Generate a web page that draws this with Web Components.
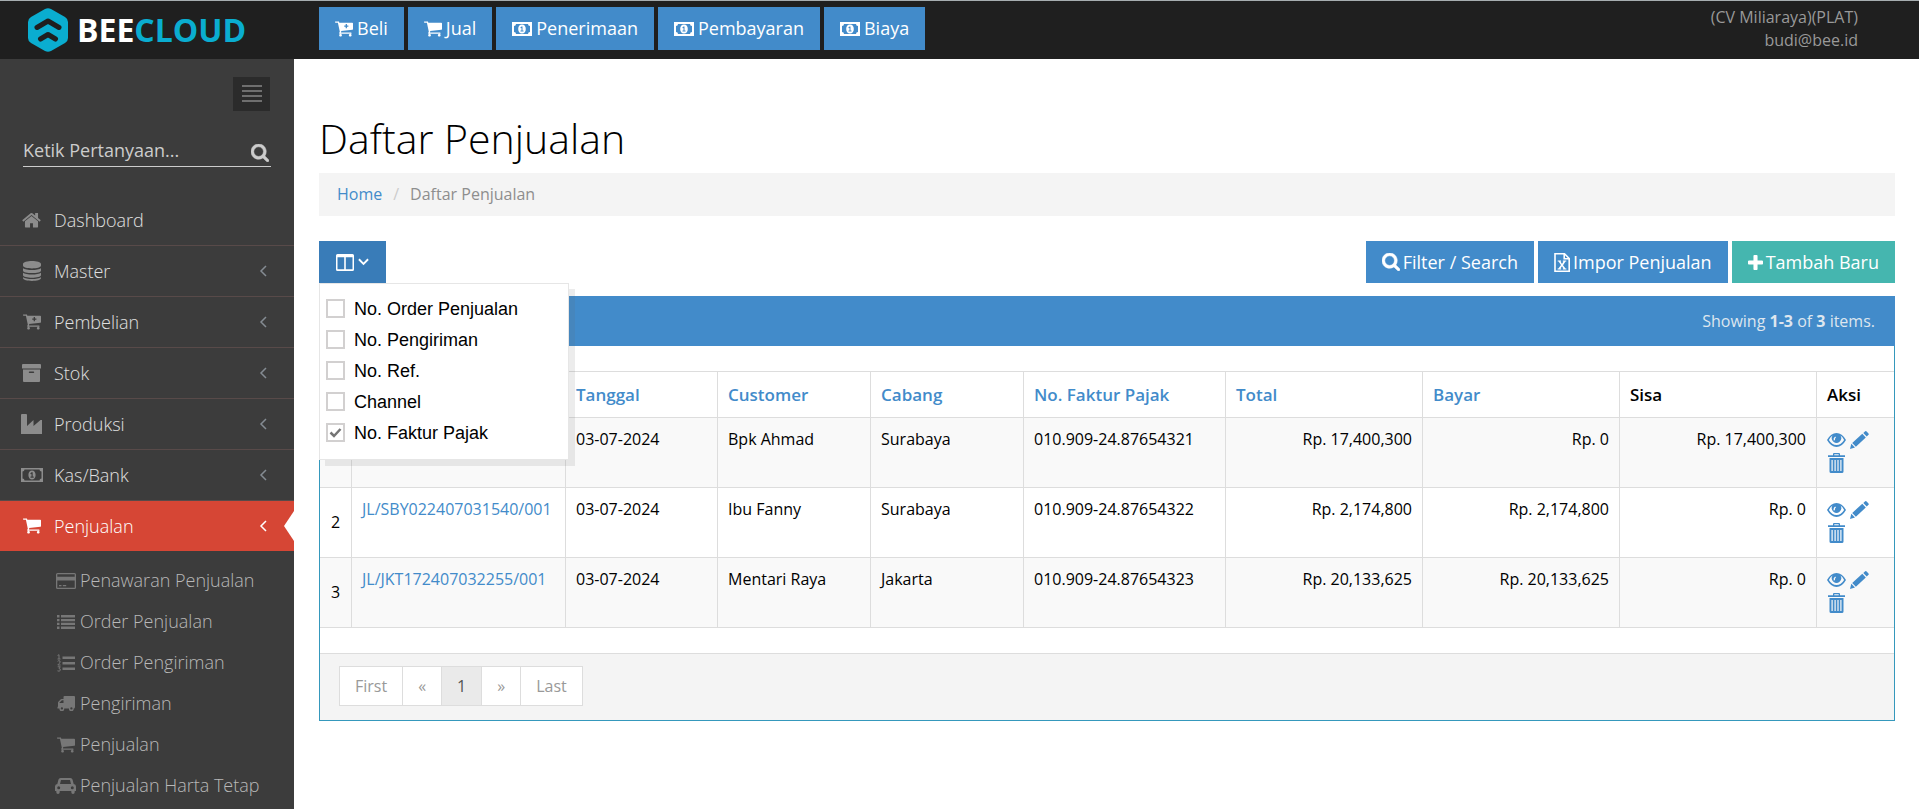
<!DOCTYPE html>
<html lang="id">
<head>
<meta charset="utf-8">
<title>Daftar Penjualan - Beecloud</title>
<style>
html, body { margin: 0; }
body { background: #fff; color: #000; font: 16px/23px "Open Sans", "Noto Sans", sans-serif; }
</style>
</head>
<body>
<bee-app>
  <bee-topbar slot="top">
    <bee-action icon="cart-plus" href="#beli">Beli</bee-action>
    <bee-action icon="cart" href="#jual">Jual</bee-action>
    <bee-action icon="money" href="#penerimaan">Penerimaan</bee-action>
    <bee-action icon="money" href="#pembayaran">Pembayaran</bee-action>
    <bee-action icon="money" href="#biaya">Biaya</bee-action>
    <span slot="company">(CV Miliaraya)(PLAT)</span>
    <span slot="email">budi@bee.id</span>
  </bee-topbar>
  <bee-sidebar slot="side">
    <bee-menu-item icon="home">Dashboard</bee-menu-item>
    <bee-menu-item icon="database" expandable>Master</bee-menu-item>
    <bee-menu-item icon="cart-plus" expandable>Pembelian</bee-menu-item>
    <bee-menu-item icon="archive" expandable>Stok</bee-menu-item>
    <bee-menu-item icon="industry" expandable>Produksi</bee-menu-item>
    <bee-menu-item icon="bill" expandable>Kas/Bank</bee-menu-item>
    <bee-menu-item icon="cart" expandable active>Penjualan
      <bee-submenu-item slot="sub" icon="card">Penawaran Penjualan</bee-submenu-item>
      <bee-submenu-item slot="sub" icon="list">Order Penjualan</bee-submenu-item>
      <bee-submenu-item slot="sub" icon="list-ol">Order Pengiriman</bee-submenu-item>
      <bee-submenu-item slot="sub" icon="truck">Pengiriman</bee-submenu-item>
      <bee-submenu-item slot="sub" icon="cart">Penjualan</bee-submenu-item>
      <bee-submenu-item slot="sub" icon="car">Penjualan Harta Tetap</bee-submenu-item>
    </bee-menu-item>
  </bee-sidebar>
  <bee-page-head>Daftar Penjualan</bee-page-head>
  <bee-toolbar>
    <bee-column-picker slot="left"></bee-column-picker>
    <bee-button icon="search">Filter / Search</bee-button>
    <bee-button icon="excel">Impor Penjualan</bee-button>
    <bee-button icon="plus" kind="success">Tambah Baru</bee-button>
  </bee-toolbar>
  <bee-panel>
    <span slot="summary">Showing <b>1-3</b> of <b>3</b> items.</span>
    <bee-sales-table></bee-sales-table>
    <bee-pagination slot="footer"></bee-pagination>
  </bee-panel>
</bee-app>

<script>
const CART = 'M704 1536q0 52-38 90t-90 38-90-38-38-90 38-90 90-38 90 38 38 90zm896 0q0 52-38 90t-90 38-90-38-38-90 38-90 90-38 90 38 38 90zm128-1088v512q0 24-16.5 42.5t-40.5 21.5l-1044 122q13 60 13 70 0 16-24 64h920q26 0 45 19t19 45-19 45-45 19h-1024q-26 0-45-19t-19-45q0-11 8-31.5t16-36 21.5-40 15.5-29.5l-177-823h-204q-26 0-45-19t-19-45 19-45 45-19h256q16 0 28.5 6.5t19.5 15.5 13 24.5 8 26 5.5 29.5 4.5 26h1201q26 0 45 19t19 45z';

/* name: [viewBox, markup, width in px, height in px] */
const ICONS = {
  'cart': ['64 128 1664 1664', `<path d="${CART}"/>`, 18, 18],
  'cart-plus': ['64 128 1664 1664', `<path fill-rule="evenodd" d="${CART}M1050 500v130h-130v120h130v130h120v-130h130v-120h-130v-130z"/>`, 18, 18],
  'home': ['60 200 1672 1350', '<path d="M1472 992v480q0 26-19 45t-45 19h-384v-384h-256v384h-384q-26 0-45-19t-19-45v-480q0-1 .5-3t.5-3l575-474 575 474q1 2 1 6zm223-69l-62 74q-8 9-21 11h-3q-13 0-21-7l-692-577-692 577q-12 8-24 7-13-2-21-11l-62-74q-8-10-7-23.5t11-21.5l719-599q32-26 76-26t76 26l244 204v-195q0-14 9-23t23-9h192q14 0 23 9t9 23v408l219 182q10 8 11 21.5t-7 23.5z"/>', 19, 16],
  'search': ['64 128 1664 1664', '<path stroke="currentColor" stroke-width="50" d="M1216 832q0-185-131.5-316.5t-316.5-131.5-316.5 131.5-131.5 316.5 131.5 316.5 316.5 131.5 316.5-131.5 131.5-316.5zm512 832q0 52-38 90t-90 38q-54 0-90-38l-343-342q-179 124-399 124-143 0-273.5-55.5t-225-150-150-225-55.5-273.5 55.5-273.5 150-225 225-150 273.5-55.5 273.5 55.5 225 150 150 225 55.5 273.5q0 220-124 399l343 343q37 37 37 90z"/>', 18, 18],
  'plus': ['192 128 1408 1408', '<path d="M1600 736v192q0 40-28 68t-68 28h-416v416q0 40-28 68t-68 28h-192q-40 0-68-28t-28-68v-416h-416q-40 0-68-28t-28-68v-192q0-40 28-68t68-28h416v-416q0-40 28-68t68-28h192q40 0 68 28t28 68v416h416q40 0 68 28t28 68z"/>', 15, 15],
  'money': ['0 0 20 14', '<path fill-rule="evenodd" d="M0 0h20v14H0zM4 2a2 2 0 0 1-2 2v6a2 2 0 0 1 2 2h12a2 2 0 0 1 2-2V4a2 2 0 0 1-2-2zM10 2.500c2.500 0 3.800 2 3.800 4.500S12.500 11.500 10 11.500 6.200 9.500 6.200 7 7.500 2.500 10 2.500zM9.500 4.500L8.300 5.600l.6.7.6-.4V8.400h-1v1.100h3V8.400h-1V4.500z"/>', 20, 14],
  'bill': ['0 0 22 14', '<path fill-rule="evenodd" d="M0 0h22v14H0zM3.500 1.500a2 2 0 0 1-2 2v7a2 2 0 0 1 2 2h15a2 2 0 0 1 2-2v-7a2 2 0 0 1-2-2zM11 2.500c2.200 0 3.600 2 3.600 4.500s-1.400 4.500-3.600 4.500S7.400 9.500 7.400 7 8.800 2.500 11 2.500zM10.500 4.300L9.200 5.500l.7.8.6-.4v2.700h-1v1.200h3.200V8.600h-1V4.300z"/>', 22, 14],
  'database': ['0 0 18 20', '<path d="M0 3c0-4 18-4 18 0v1.600c0 3.800-18 3.800-18 0zM0 7.200c3 2.400 15 2.400 18 0v2.200c0 3.600-18 3.600-18 0zM0 11.800c3 2.400 15 2.400 18 0V14c0 3.600-18 3.600-18 0zM0 16.200c3 2.400 15 2.400 18 0v.9c0 3.800-18 3.800-18 0z"/>', 18, 20],
  'archive': ['0 0 19 18', '<path fill-rule="evenodd" d="M1 0h17q1 0 1 1v3q0 .6-.6.6H.6Q0 4.600 0 4V1q0-1 1-1zM1 5.500h17v11.600q0 .9-.9.9H1.900q-.9 0-.9-.9zM7.600 7.500q-.8 0-.8.8t.8.8h3.800q.8 0 .8-.8t-.8-.8z"/>', 19, 18],
  'industry': ['0 0 21 20', '<path d="M0 20V1q0-1 1-1h4q1 0 1 1v11l6.500-6v6L19.500 6H21v14z"/>', 21, 20],
  'card': ['0 0 20 16', '<path fill-rule="evenodd" d="M1.500 0h17Q20 0 20 1.500v13q0 1.500-1.500 1.500h-17Q0 16 0 14.500v-13Q0 0 1.500 0zM1.300 1.300v2.500h17.400V1.300zM1.300 7.500v7.200h17.400V7.500zM3 12h2.500v1.300H3zM6.800 12h3.400v1.300H6.800z"/>', 20, 16],
  'list': ['0 0 18 14', '<path d="M0 0h2.500v2.500H0zM4 0h14v2.500H4zM0 3.900h2.500v2.400H0zM4 3.900h14v2.400H4zM0 7.700h2.500v2.400H0zM4 7.700h14v2.400H4zM0 11.500h2.500V14H0zM4 11.500h14V14H4z"/>', 18, 14],
  'list-ol': ['0 0 18 18', '<path d="M5.500 2.500H18V5H5.500zM5.500 8H18v2.500H5.500zM5.500 13.500H18V16H5.500z"/><path fill="none" stroke="currentColor" stroke-width="1" d="M.6 1.500L2 .7V5M.5 5h3M.6 7.300Q2 6 2.900 7 3.500 8 2.500 9.200L.8 11h2.800M.7 12.800h2.600L2 14.500q2 .3 1.200 2-.9 1.200-2.700.3"/>', 18, 18],
  'truck': ['0 0 18 15', '<path fill-rule="evenodd" d="M7.500 0H17q1 0 1 1v10q0 1.500-1.300 1.500A2.400 2.400 0 1 1 12 12.500H7.200A2.400 2.400 0 1 1 2.500 12.500H.5V11L1 10.500V6.800q0-.5.4-1l2.400-2.500q.4-.3.9-.3H6.500V1q0-1 1-1zM2.400 7H6.500V4.300H4.900L2.400 6.700zM4.900 11.300a1.100 1.100 0 1 0 0 2.300 1.100 1.100 0 1 0 0-2.300zM14.400 11.300a1.100 1.100 0 1 0 0 2.300 1.100 1.100 0 1 0 0-2.300z"/>', 18, 15],
  'car': ['0 0 21 16', '<path fill-rule="evenodd" d="M5.500 0h10q1.500 0 2 1.500L18.700 6Q21 6.400 21 8.500V13h-1.300v1.300q0 1.700-1.700 1.700t-1.700-1.700V13H4.700v1.300Q4.700 16 3 16t-1.700-1.700V13H0V8.500Q0 6.400 2.300 6L3.500 1.500Q4 0 5.500 0zM6 2L5 6h11l-1-4zM3.700 8.200a1.500 1.500 0 1 0 0 3 1.500 1.500 0 1 0 0-3zM17.300 8.200a1.500 1.500 0 1 0 0 3 1.500 1.500 0 1 0 0-3z"/>', 21, 16],
  'chevron-left': ['0 0 8 12', '<path fill="none" stroke="currentColor" stroke-width="1.500" d="M7 1L2 6l5 5"/>', 8, 12],
  'chevron-down': ['0 0 12 8', '<path fill="none" stroke="currentColor" stroke-width="2" d="M1 1l5 5 5-5"/>', 11, 8],
  'columns': ['0 0 18 17', '<path fill-rule="evenodd" d="M1.500 0h15Q18 0 18 1.500v14q0 1.500-1.500 1.500h-15Q0 17 0 15.500v-14Q0 0 1.500 0zM1.500 3.200v12h6.700v-12zM9.800 3.200v12h6.700v-12z"/>', 18, 17],
  'excel': ['0 0 16 19', '<path fill="none" stroke="currentColor" stroke-width="1.600" d="M1 .8h9.500L15.200 5.500v12.700H1zM10.200 1v4.800h5"/><path d="M3.700 7.500h3.400v1h-.6L8 10.900l1.400-2.400h-.6v-1h3.500v1h-.8L9 12.200l2.500 3.300h.9v1H8.800v-1h.6L8 13.300l-1.500 2.200h.7v1H3.600v-1h.8L7 12 4.600 8.500h-.9z"/>', 16, 19],
  'eye': ['0 0 19 14', '<path fill-rule="evenodd" d="M9.500 0Q15 0 19 7q-4 7-9.500 7T0 7q4-7 9.500-7zM5.500 2.600Q3.400 4 1.900 7q3 5 7.600 5T17.100 7q-1.500-3-3.600-4.400a4.700 4.700 0 1 1-8 0zM8.200 3.600Q6 5 6.700 7.500l1.200-.2Q7.700 5.300 9 4.600z"/>', 19, 14],
  'pencil': ['0 0 19 18', '<path d="M0 18l1.300-5.200L5 16.600zM2.200 11.900L12.300 2.800l3.500 3.700L5.900 15.700zM13.300 1.900L15.200.3q.7-.6 1.400.1l1.900 2q.7.8 0 1.400l-1.800 1.700z"/>', 19, 18],
  'trash': ['0 0 17 20', '<path fill-rule="evenodd" d="M5 2.200V1q0-1 1-1h5q1 0 1 1v1.200h5V4H0V2.200zM6.300 1.300v.9h4.400v-.9zM1.500 5h14v13.500q0 1.500-1.500 1.500H3q-1.500 0-1.500-1.500zM3.500 7v11h1.200V7zM6.500 7v11h1.200V7zM9.400 7v11h1.200V7zM12.300 7v11h1.200V7z"/>', 17, 20]
};

/* Base element: renders its template into an open shadow root. */
class BeeElement extends HTMLElement {
  constructor() {
    super();
    this.attachShadow({ mode: 'open' });
  }
  connectedCallback() {
    const t = document.createElement('template');
    t.innerHTML = this.render();
    this.shadowRoot.replaceChildren(t.content.cloneNode(true));
  }
}
const define = (name, render) =>
  customElements.define(name, class extends BeeElement { render() { return render(this); } });

define('bee-icon', el => {
  const [box, art, w, h] = ICONS[el.getAttribute('name')];
  return `<style>
    :host { display: inline-flex; flex: none; align-items: center; justify-content: center; }
    svg { display: block; fill: currentColor; }
  </style><svg viewBox="${box}" width="${w}" height="${h}" aria-hidden="true">${art}</svg>`;
});

define('bee-app', () => `<style>
  :host { display: grid; grid-template: auto 1fr / 294px minmax(0, 1fr); min-height: 100vh; }
  header { grid-column: 1 / -1; }
  aside { background: #3c3c3c; }
  main { padding: 59px 24px 24px 25px; }
  </style>
  <header><slot name="top"></slot></header>
  <aside><slot name="side"></slot></aside>
  <main><slot></slot></main>`);

define('bee-topbar', () => `<style>
  :host { display: flex; align-items: flex-start; height: 58px; background: #1f1f1f; border-top: 1px solid #a6adb0; }
  .logo { display: flex; align-items: center; gap: 9px; width: 291px; box-sizing: border-box; padding: 7px 0 0 28px; color: #fff; text-decoration: none; font: 700 32px/44px "Open Sans", sans-serif; }
  .logo i { font-style: normal; color: #0aadd0; }
  .logo svg { display: block; }
  nav { display: flex; gap: 4px; padding: 6px 0 0 28px; }
  .user { margin-left: auto; padding: 5px 61px 0 0; text-align: right; color: #999; display: grid; }
  </style>
  <a class="logo" href="#home">
    <svg width="40" height="44" viewBox="0 0 40 44" aria-hidden="true">
      <path fill="#0aadd0" d="M17 1q3-1.500 6 0l14 8q3 1.800 3 5v16q0 3.200-3 5l-14 8q-3 1.500-6 0L3 35q-3-1.800-3-5V14q0-3.200 3-5z"/>
      <path fill="none" stroke="#1f1f1f" stroke-width="5" stroke-linecap="round" stroke-linejoin="round" d="M9 19.500l11-6.500 11 6.500M12.500 31l7.500-4.500 7.500 4.500"/>
    </svg><span>BEE<i>CLOUD</i></span></a>
  <nav><slot></slot></nav>
  <div class="user"><slot name="company"></slot><slot name="email"></slot></div>`);

define('bee-action', el => `<style>
  :host { display: block; }
  a { display: flex; align-items: center; gap: 4px; height: 43px; padding: 0 16px; box-sizing: border-box; background: #428bca; color: #fff; font-size: 18px; text-decoration: none; }
  </style><a href="${el.getAttribute('href')}"><bee-icon name="${el.getAttribute('icon')}"></bee-icon><span><slot></slot></span></a>`);

define('bee-sidebar', () => `<style>
  :host { display: block; }
  .toggle { display: flex; align-items: center; justify-content: center; width: 37px; height: 34px; margin: 18px 24px 0 auto; padding: 0; border: 0; background: #2b2b2b; color: #6f6f6f; }
  form { display: flex; align-items: center; margin: 23px 23px 28px; height: 32px; border-bottom: 1px solid #ccc; }
  input { flex: 1; min-width: 0; padding: 0; border: 0; outline: 0; background: none; color: #ccc; font: 18px/24px "Open Sans", sans-serif; }
  input::placeholder { color: #ccc; opacity: 1; }
  form button { padding: 6px 2px 0 0; border: 0; background: none; color: #ccc; display: flex; }
  nav { display: block; }
  </style>
  <button class="toggle" aria-label="Menu"><svg width="20" height="18" viewBox="0 0 20 18" fill="currentColor"><path d="M0 0h20v2H0zM0 5h20v2H0zM0 10h20v2H0zM0 15h20v2H0z"/></svg></button>
  <form><input type="text" aria-label="Ketik Pertanyaan" placeholder="Ketik Pertanyaan..."><button type="button" aria-label="Cari"><bee-icon name="search"></bee-icon></button></form>
  <nav><slot></slot></nav>`);

define('bee-menu-item', el => {
  const active = el.hasAttribute('active');
  return `<style>
  :host { display: block; }
  a { position: relative; display: flex; align-items: center; height: 50px; padding: 0 27px 0 19px; border-bottom: 1px solid #584a49; color: #e0e0e0; font-size: 18px; font-weight: 300; text-decoration: none; }
  .icon { width: 25px; margin-right: 10px; color: #8c8c8c; }
  .arrow { margin-left: auto; color: #858c93; }
  .active { background: #d64635; border-bottom: 0; color: #fff; }
  .active .icon, .active .arrow { color: #fff; }
  .active::after { content: ""; position: absolute; right: 0; top: 10px; border: solid transparent; border-width: 15px 10px 15px 0; border-right-color: #fff; }
  .sub { padding-top: 9px; }
  </style>
  <a href="#menu" class="${active ? 'active' : ''}"><bee-icon class="icon" name="${el.getAttribute('icon')}"></bee-icon><span><slot></slot></span>
  ${el.hasAttribute('expandable') ? '<bee-icon class="arrow" name="chevron-left"></bee-icon>' : ''}</a>
  ${active ? '<div class="sub"><slot name="sub"></slot></div>' : ''}`;
});

define('bee-submenu-item', el => `<style>
  :host { display: block; }
  a { display: flex; align-items: center; gap: 4px; height: 41px; padding-left: 55px; color: #b8b8b8; font-size: 18px; font-weight: 300; text-decoration: none; }
  bee-icon { width: 21px; color: #777; }
  </style><a href="#submenu"><bee-icon name="${el.getAttribute('icon')}"></bee-icon><span><slot></slot></span></a>`);

define('bee-page-head', () => `<style>
  :host { display: block; }
  h1 { margin: 0 0 15px; font-size: 41px; line-height: 40px; font-weight: 300; }
  ol { display: flex; gap: 11px; margin: 0 0 25px; padding: 10px 18px; list-style: none; background: #f4f4f4; color: #8e8e8e; }
  a { color: #428bca; text-decoration: none; }
  .sep { color: #ccc; }
  </style>
  <h1><slot></slot></h1>
  <ol><li><a href="#home">Home</a></li><li class="sep" aria-hidden="true">/</li><li>Daftar Penjualan</li></ol>`);

define('bee-toolbar', () => `<style>
  :host { display: flex; justify-content: space-between; margin-bottom: 13px; }
  div { display: flex; gap: 4px; }
  </style><slot name="left"></slot><div><slot></slot></div>`);

define('bee-button', el => `<style>
  :host { display: block; }
  button { display: flex; align-items: center; gap: 3px; height: 42px; padding: 0 16px; border: 0; background: ${el.getAttribute('kind') === 'success' ? '#45b6af' : '#428bca'}; color: #fff; font: 18px/24px "Open Sans", sans-serif; }
  </style><button type="button"><bee-icon name="${el.getAttribute('icon')}"></bee-icon><span><slot></slot></span></button>`);

define('bee-column-picker', () => {
  const cols = ['No. Order Penjualan', 'No. Pengiriman', 'No. Ref.', 'Channel', 'No. Faktur Pajak'];
  return `<style>
  :host { display: block; position: relative; }
  button { display: flex; align-items: center; gap: 4px; height: 42px; padding: 0 17px; border: 0; background: #397cb8; color: #fff; }
  .menu { position: absolute; z-index: 5; left: 0; top: 42px; width: 250px; height: 177px; box-sizing: border-box; padding: 9px 6px; background: #fff; border: 1px solid #e6e6e6; box-shadow: 6px 6px rgba(102, 102, 102, .12); }
  label { display: flex; align-items: center; gap: 9px; height: 31px; color: #000; font: 18px/24px "Liberation Sans", Arial, sans-serif; }
  input { appearance: none; box-sizing: border-box; width: 19px; height: 19px; margin: 0; border: 2px solid #d2d0d0; background: #fff; }
  input:checked { background: url("data:image/svg+xml,%3Csvg xmlns='http://www.w3.org/2000/svg' viewBox='0 0 15 15'%3E%3Cpath d='M2.500 7.500l3.500 3.500 6.500-7' fill='none' stroke='%23757575' stroke-width='2.500'/%3E%3C/svg%3E") center / 15px 15px no-repeat; }
  </style>
  <button type="button" aria-label="Kolom" aria-expanded="true"><bee-icon name="columns"></bee-icon><bee-icon name="chevron-down"></bee-icon></button>
  <div class="menu">${cols.map((c, i) => `<label><input type="checkbox"${i === 4 ? ' checked' : ''}><span>${c}</span></label>`).join('')}</div>`;
});

define('bee-panel', () => `<style>
  :host { display: block; border: 1px solid #3598bc; }
  .head { display: flex; justify-content: flex-end; align-items: center; height: 50px; margin: -1px -1px 0; padding: 0 20px; box-sizing: border-box; background: #428bca; color: #dde6ef; }
  .body { padding: 25px 0; }
  .foot { padding: 12px 19px 14px; background: #f4f4f4; border-top: 1px solid #ddd; }
  </style>
  <div class="head"><slot name="summary"></slot></div>
  <div class="body"><slot></slot></div>
  <div class="foot"><slot name="footer"></slot></div>`);

define('bee-sales-table', () => {
  const widths = [32, 214, 152, 153, 153, 202, 197, 197, 197, 77];
  const heads = ['', '', 'Tanggal', 'Customer', 'Cabang', 'No. Faktur Pajak', 'Total', 'Bayar'];
  const rows = [
    ['', '', '03-07-2024', 'Bpk Ahmad', 'Surabaya', '010.909-24.87654321', 'Rp. 17,400,300', 'Rp. 0', 'Rp. 17,400,300'],
    ['2', 'JL/SBY022407031540/001', '03-07-2024', 'Ibu Fanny', 'Surabaya', '010.909-24.87654322', 'Rp. 2,174,800', 'Rp. 2,174,800', 'Rp. 0'],
    ['3', 'JL/JKT172407032255/001', '03-07-2024', 'Mentari Raya', 'Jakarta', '010.909-24.87654323', 'Rp. 20,133,625', 'Rp. 20,133,625', 'Rp. 0']
  ];
  const cell = (v, i) => i === 1 ? `<td>${v ? `<a href="#${v}">${v}</a>` : ''}</td>` : `<td class="${i === 0 ? 'no' : i > 5 ? 'num' : ''}">${v}</td>`;
  return `<style>
  :host { display: block; }
  table { width: 100%; table-layout: fixed; border-collapse: separate; border-spacing: 0; border-top: 1px solid #ddd; }
  th, td { box-sizing: border-box; padding: 10px; border: solid #ddd; border-width: 0 1px 1px 0; white-space: nowrap; }
  th:last-child, td:last-child { border-right: 0; }
  th { height: 46px; padding-block: 0; text-align: left; font-size: 17px; font-weight: 600; }
  td { height: 70px; vertical-align: top; }
  td.no { padding-inline: 0; text-align: center; vertical-align: middle; }
  td.num { text-align: right; }
  tbody tr:nth-child(odd) { background: #f9f9f9; }
  a { color: #428bca; text-decoration: none; }
  .acts { display: grid; grid-template-columns: 19px 19px; grid-auto-rows: 23px; gap: 0 4px; }
  .acts a { display: flex; align-items: center; justify-content: center; }
  </style>
  <table>
    <colgroup>${widths.map(w => `<col style="width:${w}px">`).join('')}</colgroup>
    <thead><tr>${heads.map(h => `<th>${h ? `<a href="#sort">${h}</a>` : ''}</th>`).join('')}<th>Sisa</th><th>Aksi</th></tr></thead>
    <tbody>${rows.map(r => `<tr>${r.map(cell).join('')}<td><div class="acts">
      <a href="#view" aria-label="Lihat"><bee-icon name="eye"></bee-icon></a><a href="#edit" aria-label="Ubah"><bee-icon name="pencil"></bee-icon></a><a href="#delete" aria-label="Hapus"><bee-icon name="trash"></bee-icon></a></div></td></tr>`).join('')}</tbody>
  </table>`;
});

define('bee-pagination', () => `<style>
  :host { display: block; }
  ul { display: inline-flex; margin: 0; padding: 0; list-style: none; vertical-align: top; border: 1px solid #ddd; }
  li + li { border-left: 1px solid #ddd; }
  a { display: block; padding: 8px 15px; line-height: 22px; background: #fff; color: #999; text-decoration: none; }
  .current { background: #eaeaea; color: #555; }
  </style>
  <ul><li><a href="#first">First</a></li><li><a href="#prev">«</a></li><li><a class="current" href="#1" aria-current="page">1</a></li><li><a href="#next">»</a></li><li><a href="#last">Last</a></li></ul>`);
</script>
</body>
</html>
